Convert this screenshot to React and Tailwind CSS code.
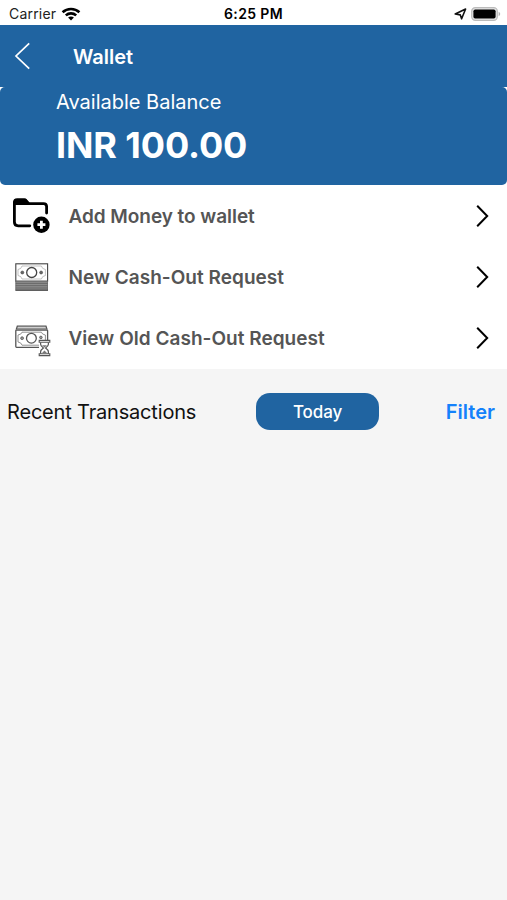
import React from 'react';

function WifiIcon() {
  return (
    <svg width="20" height="14" viewBox="0 0 20 14" fill="none" stroke="#000" strokeWidth="2.6">
      <path d="M1.6 5.2C6.2 .9 13.8 .9 18.4 5.2" />
      <path d="M4.8 8.4C7.8 5.7 12.2 5.7 15.2 8.4" />
      <path d="M7.1 10.6C8.7 9.2 11.3 9.2 12.9 10.6L10 13.6Z" fill="#000" stroke="none" />
    </svg>
  );
}

function LocationIcon() {
  return (
    <svg width="13" height="12" viewBox="0 0 13 12" fill="none" stroke="#111" strokeWidth="1.6" strokeLinejoin="round">
      <path d="M11.6 1L7.6 10.8L6.3 6.9L1.2 6Z" />
    </svg>
  );
}

function BatteryIcon() {
  return (
    <svg width="30" height="14" viewBox="0 0 30 14">
      <rect x=".7" y=".7" width="25.6" height="12.6" rx="3.6" fill="#e4e4e4" stroke="#bbb" strokeWidth="1.2" />
      <rect x="2.4" y="2.4" width="22.2" height="9.2" rx="1.8" fill="#000" />
      <path d="M27.6 4.8C29.7 5.6 29.7 8.4 27.6 9.2Z" fill="#b3b3b3" />
    </svg>
  );
}

function FolderPlusIcon() {
  return (
    <svg width="38" height="38" viewBox="0 0 38 38" fill="none">
      <path d="M34.6 16V9.6Q34.6 6.6 31.6 6.6H16L13.5 3.4H5.5Q2.4 3.4 2.4 6.5V25Q2.4 28.8 6.2 28.8H17.8" stroke="#000" strokeWidth="2.8" strokeLinecap="round" strokeLinejoin="round" />
      <path d="M1 8.2V5.5Q1 1.2 5.3 1.2H12.5Q14 1.2 14.9 2.5L17.5 5.6V8H4Z" fill="#000" />
      <circle cx="29.4" cy="27.7" r="8.2" fill="#000" />
      <path d="M29.4 23.7V31.7M25.4 27.7H33.4" stroke="#fff" strokeWidth="2.8" />
    </svg>
  );
}

function CashStackIcon() {
  return (
    <svg width="34" height="28" viewBox="0 0 34 28" fill="none" stroke="#444">
      <rect x=".8" y=".8" width="31.8" height="17.4" strokeWidth="1.1" />
      <path d="M3 6.5Q6.5 6 7 3H26.4Q27 6 30.4 6.5V12.5Q27 13 26.4 16H7Q6.5 13 3 12.5Z" strokeWidth=".6" stroke="#999" />
      <circle cx="16.7" cy="9.5" r="5" strokeWidth="1.3" />
      <circle cx="7.3" cy="9.5" r="1.5" fill="#666" strokeWidth=".6" />
      <circle cx="26.1" cy="9.5" r="1.5" fill="#666" strokeWidth=".6" />
      <rect x=".8" y="18.2" width="31.8" height="9" fill="#8d8d8d" stroke="#666" strokeWidth=".8" />
      <path d="M.8 20.4H32.6M.8 22.7H32.6M.8 25H32.6" strokeWidth=".8" stroke="#5e5e5e" />
      <path d="M.5 27.2H33" strokeWidth="1" />
    </svg>
  );
}

function CashPendingIcon() {
  return (
    <svg width="36" height="32" viewBox="0 0 36 32" fill="none" stroke="#555">
      <path d="M1.3 4.3L2.3 1.2H31L32 4.3" strokeWidth="1.2" />
      <path d="M2 3.2H31.3" strokeWidth=".9" />
      <rect x=".8" y="5" width="31.8" height="17.4" rx=".8" fill="#fff" strokeWidth="1.3" />
      <path d="M3 10Q6.5 9.5 7 7.2H26.4Q27 9.5 30.4 10V17Q27 17.5 26.4 20.2H7Q6.5 17.5 3 17Z" strokeWidth=".8" stroke="#777" />
      <circle cx="16.4" cy="13.2" r="4.9" strokeWidth="1.3" />
      <circle cx="7.1" cy="13.2" r="1.4" fill="#999" strokeWidth=".8" />
      <circle cx="25.9" cy="12.4" r="1.3" fill="#999" strokeWidth=".8" />
      <path d="M24 15H35V31H24Z" fill="#fff" stroke="none" />
      <path d="M24.2 15.4H34.8V17.2H24.2ZM24.2 28.8H34.8V30.6H24.2Z" strokeWidth="1.1" />
      <path d="M25.6 17.4V19.3Q25.6 21 28.4 23Q25.6 25 25.6 26.7V28.8M33.4 17.4V19.3Q33.4 21 30.6 23Q33.4 25 33.4 26.7V28.8" strokeWidth="1.2" />
      <path d="M27 20.2H32L29.5 22.5ZM27 28L29.5 25.4L32 28Z" fill="#777" stroke="none" />
    </svg>
  );
}

function ChevronRight() {
  return (
    <svg width="14" height="24" viewBox="0 0 14 24" fill="none" stroke="#000" strokeWidth="2">
      <path d="M1.2 1.8L11.2 12L1.2 22.2" />
    </svg>
  );
}

const rows = [
  { label: 'Add Money to wallet', icon: <FolderPlusIcon />, pad: 'pl-3', text: 'tracking-[-0.05px] pt-0.5' },
  { label: 'New Cash-Out Request', icon: <CashStackIcon />, pad: 'pl-[15px]', text: 'tracking-[0.03px] pt-px' },
  { label: 'View Old Cash-Out Request', icon: <CashPendingIcon />, pad: 'pl-[15px] pt-[5px]', text: 'tracking-[0.03px] pt-px' },
];

export default function Wallet() {
  return (
    <div className="min-h-[900px] bg-[#f5f5f5] font-['Inter',sans-serif]">
      <div className="grid grid-cols-3 items-center h-[25px] bg-white pt-0.5 text-black">
        <div className="flex items-center gap-[5px] pl-[9px]">
          <span className="text-[14px] leading-none tracking-[0.2px] text-[#222]">Carrier</span>
          <WifiIcon />
        </div>
        <span className="text-center text-[14px] leading-none font-semibold tracking-[0.35px]">6:25 PM</span>
        <div className="flex items-center justify-end gap-1 pr-1.5">
          <LocationIcon />
          <BatteryIcon />
        </div>
      </div>

      <div className="flex items-center h-[62px] bg-[#2064a1] pl-3.5 text-white">
        <svg width="18" height="28" viewBox="0 0 18 28" fill="none" stroke="#fff" strokeWidth="1.7">
          <path d="M15.2 1.3L2 14L15.2 26.7" />
        </svg>
        <h1 className="ml-[41px] pt-px text-[20px] leading-none font-semibold">Wallet</h1>
      </div>

      <div className="bg-white">
        <div className="h-[98px] rounded-[5px] bg-[#2064a1] pl-14 pt-1 text-white">
          <p className="text-[20px] leading-[22px]">Available Balance</p>
          <p className="mt-2.5 text-[36px] leading-[44px] font-bold tracking-[-0.1px]">INR 100.00</p>
        </div>
        {rows.map((row) => (
          <div key={row.label} className="flex items-center h-[61.4px] pr-[17px]">
            <div className={`w-[68.5px] shrink-0 ${row.pad}`}>{row.icon}</div>
            <span className={`flex-1 text-[19px] leading-none font-semibold text-[#555] ${row.text}`}>{row.label}</span>
            <ChevronRight />
          </div>
        ))}
      </div>

      <div className="flex items-center h-[85px] pl-[7px] pr-3">
        <h2 className="w-[249px] text-[20px] leading-none tracking-[-0.18px] text-[#111]">Recent Transactions</h2>
        <button className="w-[123px] h-[37px] rounded-[14px] bg-[#2064a1] pt-0.5 text-[17px] leading-none font-medium tracking-[-0.1px] text-white">Today</button>
        <button className="ml-auto text-[20px] leading-none font-semibold text-[#1481fb]">Filter</button>
      </div>
    </div>
  );
}
